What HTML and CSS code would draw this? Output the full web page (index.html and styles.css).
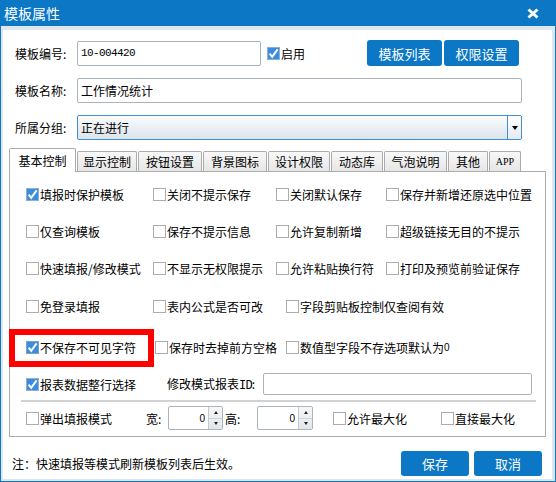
FILE: index.html
```html
<!DOCTYPE html>
<html lang="zh-CN">
<head>
<meta charset="utf-8">
<title>模板属性</title>
<link rel="stylesheet" href="styles.css">
</head>
<body>
<div class="window">
  <div class="titlebar">
    <span class="title">模板属性</span>
    <svg class="close" width="12" height="11" viewBox="0 0 12 11"><path d="M1.5 1.5 L10.5 9.5 M10.5 1.5 L1.5 9.5" stroke="#fff" stroke-width="3" fill="none"/></svg>
  </div>
  <div class="client">
    <div class="frow r1">
      <span class="lbl">模板编号:</span>
      <div class="input code">10-004420</div>
      <span class="chk top-chk"><svg class="box" width="13" height="13" viewBox="0 0 13 13"><rect x="0.5" y="0.5" width="12" height="12" fill="#3a8ce0" stroke="#8fb0d0"/><path d="M2.6 6.6 L5.2 9.8 L10.6 2.4" fill="none" stroke="#fff" stroke-width="2"/></svg>启用</span>
      <div class="btns"><span class="btn">模板列表</span><span class="btn">权限设置</span></div>
    </div>
    <div class="frow r2">
      <span class="lbl">模板名称:</span>
      <div class="input wide">工作情况统计</div>
    </div>
    <div class="frow r3">
      <span class="lbl">所属分组:</span>
      <div class="select"><span class="val">正在进行</span><span class="arr"><i class="tri"></i></span></div>
    </div>

    <div class="tabs">
      <span class="tab active w1">基本控制</span>
      <span class="tab w2">显示控制</span>
      <span class="tab w3">按钮设置</span>
      <span class="tab w4">背景图标</span>
      <span class="tab w5">设计权限</span>
      <span class="tab w6">动态库</span>
      <span class="tab w7">气泡说明</span>
      <span class="tab w8">其他</span>
      <span class="tab w9 app">APP</span>
    </div>
    <div class="panel">
      <div class="prow grid4">
        <span class="chk c1"><svg class="box" width="13" height="13" viewBox="0 0 13 13"><rect x="0.5" y="0.5" width="12" height="12" fill="#3a8ce0" stroke="#8fb0d0"/><path d="M2.6 6.6 L5.2 9.8 L10.6 2.4" fill="none" stroke="#fff" stroke-width="2"/></svg>填报时保护模板</span>
        <span class="chk c2"><i class="ubox"></i>关闭不提示保存</span>
        <span class="chk c3"><i class="ubox"></i>关闭默认保存</span>
        <span class="chk"><i class="ubox"></i>保存并新增还原选中位置</span>
      </div>
      <div class="prow grid4">
        <span class="chk c1"><i class="ubox"></i>仅查询模板</span>
        <span class="chk c2"><i class="ubox"></i>保存不提示信息</span>
        <span class="chk c3"><i class="ubox"></i>允许复制新增</span>
        <span class="chk"><i class="ubox"></i>超级链接无目的不提示</span>
      </div>
      <div class="prow grid4">
        <span class="chk c1"><i class="ubox"></i>快速填报/修改模式</span>
        <span class="chk c2"><i class="ubox"></i>不显示无权限提示</span>
        <span class="chk c3"><i class="ubox"></i>允许粘贴换行符</span>
        <span class="chk"><i class="ubox"></i>打印及预览前验证保存</span>
      </div>
      <div class="prow r4">
        <span class="chk c1"><i class="ubox"></i>免登录填报</span>
        <span class="chk c2b"><i class="ubox"></i>表内公式是否可改</span>
        <span class="chk"><i class="ubox"></i>字段剪贴板控制仅查阅有效</span>
      </div>
      <div class="prow r5">
        <span class="chk c1b"><svg class="box" width="13" height="13" viewBox="0 0 13 13"><rect x="0.5" y="0.5" width="12" height="12" fill="#3a8ce0" stroke="#7f9fbf"/><path d="M2.6 6.6 L5.2 9.8 L10.6 2.4" fill="none" stroke="#fff" stroke-width="2"/></svg>不保存不可见字符</span>
        <span class="chk c2c"><i class="ubox"></i>保存时去掉前方空格</span>
        <span class="chk"><i class="ubox"></i>数值型字段不存选项默认为<span class="num">0</span></span>
      </div>
      <div class="prow r6">
        <span class="chk c6"><svg class="box" width="13" height="13" viewBox="0 0 13 13"><rect x="0.5" y="0.5" width="12" height="12" fill="#3a8ce0" stroke="#8fb0d0"/><path d="M2.6 6.6 L5.2 9.8 L10.6 2.4" fill="none" stroke="#fff" stroke-width="2"/></svg>报表数据整行选择</span>
        <span class="idlbl">修改模式报表<span class="mono">ID</span>:</span>
        <div class="input idinput"></div>
      </div>
      <div class="sep"></div>
      <div class="prow r7">
        <span class="chk c7"><i class="ubox"></i>弹出填报模式</span>
        <span class="wl">宽:</span>
        <div class="spin"><span class="sv">0</span><span class="sb"><i class="up"></i><i class="dn"></i></span></div>
        <span class="hl">高:</span>
        <div class="spin s2"><span class="sv">0</span><span class="sb"><i class="up"></i><i class="dn"></i></span></div>
        <span class="chk c8"><i class="ubox"></i>允许最大化</span>
        <span class="chk"><i class="ubox"></i>直接最大化</span>
      </div>
      <div class="redmark"></div>
    </div>
    <div class="foot">
      <span class="note">注：快速填报等模式刷新模板列表后生效。</span>
      <div class="fbtns"><span class="btn sm">保存</span><span class="btn sm">取消</span></div>
    </div>
  </div>
</div>
</body>
</html>
```

FILE: styles.css
```css
* { box-sizing: border-box; margin: 0; padding: 0; }
html, body { width: 556px; height: 482px; overflow: hidden; }
body {
  font-family: "Noto Sans CJK SC", "Microsoft YaHei", sans-serif;
  font-size: 12px;
  color: #000;
  background: #fff;
}
.window {
  width: 556px;
  height: 482px;
  border: 1px solid #0b77c5;
  background: #dfe6ee;
  display: flex;
  flex-direction: column;
}
.titlebar {
  flex: none;
  height: 25px;
  background: #0b77c5;
  display: flex;
  align-items: center;
  justify-content: space-between;
  padding: 0 16px 0 3px;
}
.title { color: #fff; font-size: 14px; line-height: 25px; }
.close { display: block; }

.client {
  flex: 1;
  background: #fff;
  margin: 4px 3px 2px 2px;
  display: flex;
  flex-direction: column;
}
.frow { display: flex; align-items: center; padding-left: 12px; height: 25px; flex: none; }
.r1 { margin-top: 10px; height: 26px; }
.r2 { margin-top: 12px; }
.r3 { margin-top: 12px; }
.lbl { width: 62px; white-space: nowrap; }
.input {
  height: 25px;
  border: 1px solid #abb3bd;
  border-radius: 2px;
  padding-left: 3px;
  display: flex;
  align-items: center;
  white-space: nowrap;
  background: #fff;
}
.code {
  width: 184px;
  font-family: "Liberation Mono", monospace;
  font-size: 11px;
  letter-spacing: -0.6px;
}
.wide { width: 445px; }
.chk { display: flex; align-items: center; white-space: nowrap; }
.box { display: block; flex: none; margin-right: 1px; }
.ubox {
  display: block;
  flex: none;
  width: 13px;
  height: 13px;
  border: 1px solid #acacac;
  background: #fff;
  margin-right: 1px;
}
.top-chk { margin-left: 6px; }
.btns { margin-left: auto; margin-right: 33px; display: flex; gap: 2px; }
.btn {
  display: flex;
  align-items: center;
  justify-content: center;
  width: 75px;
  height: 26px;
  background: #0b77c5;
  color: #fff;
  border-radius: 3px;
  font-size: 13px;
}
.btn.sm { width: 68px; height: 25px; }

.select {
  width: 445px;
  height: 25px;
  border: 1px solid #3c8fd8;
  border-radius: 2px;
  background: linear-gradient(#fbfcfd, #dce3ea);
  display: flex;
}
.select .val { flex: 1; padding-left: 3px; display: flex; align-items: center; }
.select .arr {
  width: 14px;
  border-left: 1px solid #3c8fd8;
  display: flex;
  align-items: center;
  justify-content: center;
  background: linear-gradient(#ffffff, #e6ebf0);
}
.tri {
  display: block;
  width: 0;
  height: 0;
  border-left: 3.5px solid transparent;
  border-right: 3.5px solid transparent;
  border-top: 4px solid #000;
}

.tabs {
  margin-top: 8px;
  height: 23px;
  padding-left: 6px;
  display: flex;
  align-items: flex-end;
  gap: 1px;
  position: relative;
  z-index: 1;
  flex: none;
}
.tab {
  height: 20px;
  border: 1px solid #acacac;
  border-bottom: none;
  border-radius: 2px 2px 0 0;
  background: linear-gradient(#f8f8f8, #e6e6e6);
  display: flex;
  align-items: center;
  justify-content: center;
  white-space: nowrap;
}
.tab.active { height: 24px; margin-bottom: -1px; background: #fff; }
.tab.app { font-family: "Liberation Serif", serif; font-size: 10px; }
.w1 { width: 67px; }
.w2 { width: 60px; }
.w3 { width: 64px; }
.w4 { width: 64px; }
.w5 { width: 62px; }
.w6 { width: 52px; }
.w7 { width: 63px; }
.w8 { width: 40px; }
.w9 { width: 32px; }

.panel {
  flex: none;
  margin: 0 6px;
  height: 266px;
  border: 1px solid #acacac;
  background: #fff;
  position: relative;
  padding-top: 4px;
}
.prow { display: flex; align-items: center; padding-left: 16px; height: 37px; }
.c1 { width: 127px; }
.c2 { width: 123px; }
.c3 { width: 110px; }
.r4 { height: 38px; }
.c2b { width: 133px; }
.r5 { height: 44px; }
.c1b { width: 129px; }
.c2c { width: 131px; }
.num { font-family: "Liberation Sans", sans-serif; font-size: 10px; }
.r6 { height: 30px; }
.c6 { width: 141px; }
.idlbl { width: 96px; white-space: nowrap; }
.mono { font-family: "Liberation Mono", monospace; font-size: 12px; letter-spacing: -0.8px; }
.idinput { width: 269px; height: 22px; }
.sep { height: 2px; background: #d2d2d2; margin: 1px 9px 0 11px; }
.r7 { height: 32px; }
.c7 { width: 111px; }
.wl { width: 31px; padding-left: 9px; white-space: nowrap; }
.hl { width: 34px; padding-left: 2px; white-space: nowrap; }
.spin {
  width: 55px;
  height: 24px;
  border: 1px solid #abb3bd;
  border-radius: 2px;
  display: flex;
  background: #fff;
}
.spin.s2 { width: 56px; }
.sv {
  flex: 1;
  text-align: right;
  padding-right: 3px;
  font-family: "Liberation Sans", sans-serif;
  font-size: 10px;
  display: flex;
  align-items: center;
  justify-content: flex-end;
}
.sb {
  width: 14px;
  border-left: 1px solid #c5cad0;
  display: flex;
  flex-direction: column;
  background: linear-gradient(#f7f7f7, #e3e6ea);
}
.sb i { flex: 1; display: flex; align-items: center; justify-content: center; }
.sb .up { border-bottom: 1px solid #d0d4d8; }
.sb .up::after {
  content: "";
  border-left: 2.5px solid transparent;
  border-right: 2.5px solid transparent;
  border-bottom: 3px solid #222;
}
.sb .dn::after {
  content: "";
  border-left: 2.5px solid transparent;
  border-right: 2.5px solid transparent;
  border-top: 3px solid #222;
}
.c8 { width: 108px; margin-left: 20px; }

.redmark {
  position: absolute;
  left: -1px;
  top: 157px;
  width: 145px;
  height: 38px;
  border: 6px solid #f00;
}

.foot {
  flex: 1;
  display: flex;
  align-items: center;
  padding: 10px 10px 0 9px;
}
.note { white-space: nowrap; }
.fbtns { margin-left: auto; display: flex; gap: 5px; }
```
